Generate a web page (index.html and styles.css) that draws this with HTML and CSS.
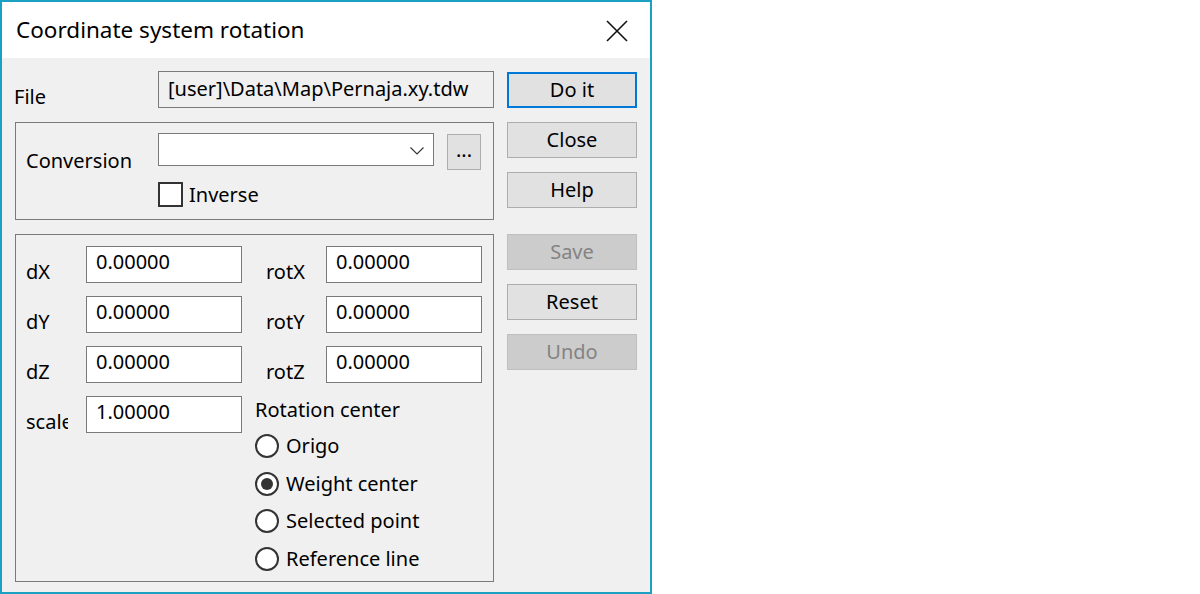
FILE: index.html
```html
<!DOCTYPE html>
<html>
<head>
<meta charset="utf-8">
<link rel="stylesheet" href="styles.css">
</head>
<body>
<div class="win">
  <div class="titlebar">
    <span class="title">Coordinate system rotation</span>
    <svg class="xicon" width="22" height="22" viewBox="0 0 22 22"><path d="M1 1 L21 21 M21 1 L1 21" stroke="#111" stroke-width="1.6" fill="none"/></svg>
  </div>
  <div class="body">
    <div class="leftcol">
      <div class="filerow">
        <span class="lbl filelbl">File</span>
        <div class="filebox">[user]\Data\Map\Pernaja.xy.tdw</div>
      </div>
      <div class="group g1">
        <div class="convrow">
          <span class="lbl convlbl">Conversion</span>
          <div class="combo">
            <svg class="chev" width="14" height="8" viewBox="0 0 14 8"><path d="M0.5 0.5 L7 7 L13.5 0.5" stroke="#333" stroke-width="1.1" fill="none"/></svg>
          </div>
          <div class="btn dots">...</div>
        </div>
        <div class="chkrow">
          <span class="chk"></span>
          <span class="lbl">Inverse</span>
        </div>
      </div>
      <div class="group g2">
        <div class="col colA">
          <div class="frow"><span class="lbl flbl">dX</span><div class="inp">0.00000</div></div>
          <div class="frow"><span class="lbl flbl">dY</span><div class="inp">0.00000</div></div>
          <div class="frow"><span class="lbl flbl">dZ</span><div class="inp">0.00000</div></div>
          <div class="frow"><span class="lbl flbl clip">scale</span><div class="inp">1.00000</div></div>
        </div>
        <div class="col colB">
          <div class="frow"><span class="lbl rlbl">rotX</span><div class="inp">0.00000</div></div>
          <div class="frow"><span class="lbl rlbl">rotY</span><div class="inp">0.00000</div></div>
          <div class="frow"><span class="lbl rlbl">rotZ</span><div class="inp">0.00000</div></div>
          <div class="rchead lbl">Rotation center</div>
          <div class="radio"><span class="rb"></span><span class="lbl">Origo</span></div>
          <div class="radio"><span class="rb on"></span><span class="lbl">Weight center</span></div>
          <div class="radio"><span class="rb"></span><span class="lbl">Selected point</span></div>
          <div class="radio"><span class="rb"></span><span class="lbl">Reference line</span></div>
        </div>
      </div>
    </div>
    <div class="rightcol">
      <div class="btn big def">Do it</div>
      <div class="btn big">Close</div>
      <div class="btn big">Help</div>
      <div class="btn big dis sep">Save</div>
      <div class="btn big">Reset</div>
      <div class="btn big dis">Undo</div>
    </div>
  </div>
</div>
</body>
</html>
```
FILE: styles.css
```css
* { box-sizing: border-box; }
html, body { margin: 0; padding: 0; background: #ffffff; }
body { font-family: "Noto Sans", "Open Sans", sans-serif; font-size: 20px; color: #000; }
.win {
  width: 652px; height: 594px;
  border: 2px solid #1aa0c2;
  display: flex; flex-direction: column;
}
.titlebar {
  height: 56px; background: #fff;
  display: flex; align-items: center; justify-content: space-between;
  padding: 0 22px 0 14px;
}
.title { font-size: 22.5px; line-height: 26px; margin-top: 0; }
.xicon { display: block; margin-top: 2px; }
.body {
  flex: 1; background: #f0f0f0;
  display: flex; padding: 13px 0 0 12px;
}
.leftcol { width: 480px; display: flex; flex-direction: column; }
.rightcol { margin-left: 13px; width: 130px; display: flex; flex-direction: column; padding-top: 1px; }
.lbl { line-height: 22px; white-space: nowrap; }
.filerow { display: flex; height: 37px; }
.filelbl { width: 144px; margin-top: 15px; }
.filebox {
  width: 336px; height: 37px; border: 1px solid #7a7a7a; background: #f0f0f0;
  padding: 4px 0 0 9px; line-height: 26px; white-space: nowrap; overflow: hidden;
}
.group { border: 1px solid #7a7a7a; margin-left: 1px; width: 479px; }
.g1 { margin-top: 14px; height: 98px; padding: 10px 0 0 10px; }
.convrow { display: flex; height: 36px; }
.convlbl { width: 132px; margin-top: 17px; }
.combo {
  width: 276px; height: 33px; background: #fff; border: 1px solid #7a7a7a;
  position: relative;
}
.chev { position: absolute; right: 9px; top: 13px; }
.btn {
  background: #e1e1e1; border: 1px solid #adadad;
  display: flex; align-items: center; justify-content: center;
  line-height: 22px;
}
.dots { width: 34px; height: 36px; margin-left: 13px; margin-top: 1px; padding-bottom: 4px; }
.chkrow { display: flex; align-items: center; margin-top: 13px; }
.chk { width: 25px; height: 25px; border: 2px solid #333; background: #fff; margin-left: 132px; margin-right: 6px; }
.g2 { margin-top: 14px; height: 348px; display: flex; padding: 11px 0 0 10px; }
.col { display: flex; flex-direction: column; }
.colA { width: 229px; }
.colB { width: 227px; }
.frow { display: flex; height: 37px; margin-bottom: 13px; }
.flbl { width: 60px; margin-top: 15px; }
.clip { width: 42px; overflow: hidden; margin-right: 18px; }
.rlbl { width: 60px; margin-left: 11px; margin-top: 15px; }
.inp {
  width: 156px; height: 37px; background: #fff; border: 1px solid #7a7a7a;
  padding: 2px 0 0 9px; line-height: 26px;
}
.rchead { height: 22px; margin-top: 3px; margin-bottom: 6px; }
.radio { display: flex; align-items: center; height: 37.7px; }
.rb {
  width: 24px; height: 24px; border-radius: 50%; border: 2px solid #333; background: #fff;
  margin-right: 7px; position: relative; flex: none;
}
.rb.on::after {
  content: ""; position: absolute; left: 4px; top: 4px; width: 12px; height: 12px;
  border-radius: 50%; background: #333;
}
.big { height: 36px; margin-bottom: 14px; }
.def { border: 2px solid #0078d7; }
.dis { background: #cccccc; border-color: #bfbfbf; color: #838383; }
.sep { margin-top: 12px; }
```
